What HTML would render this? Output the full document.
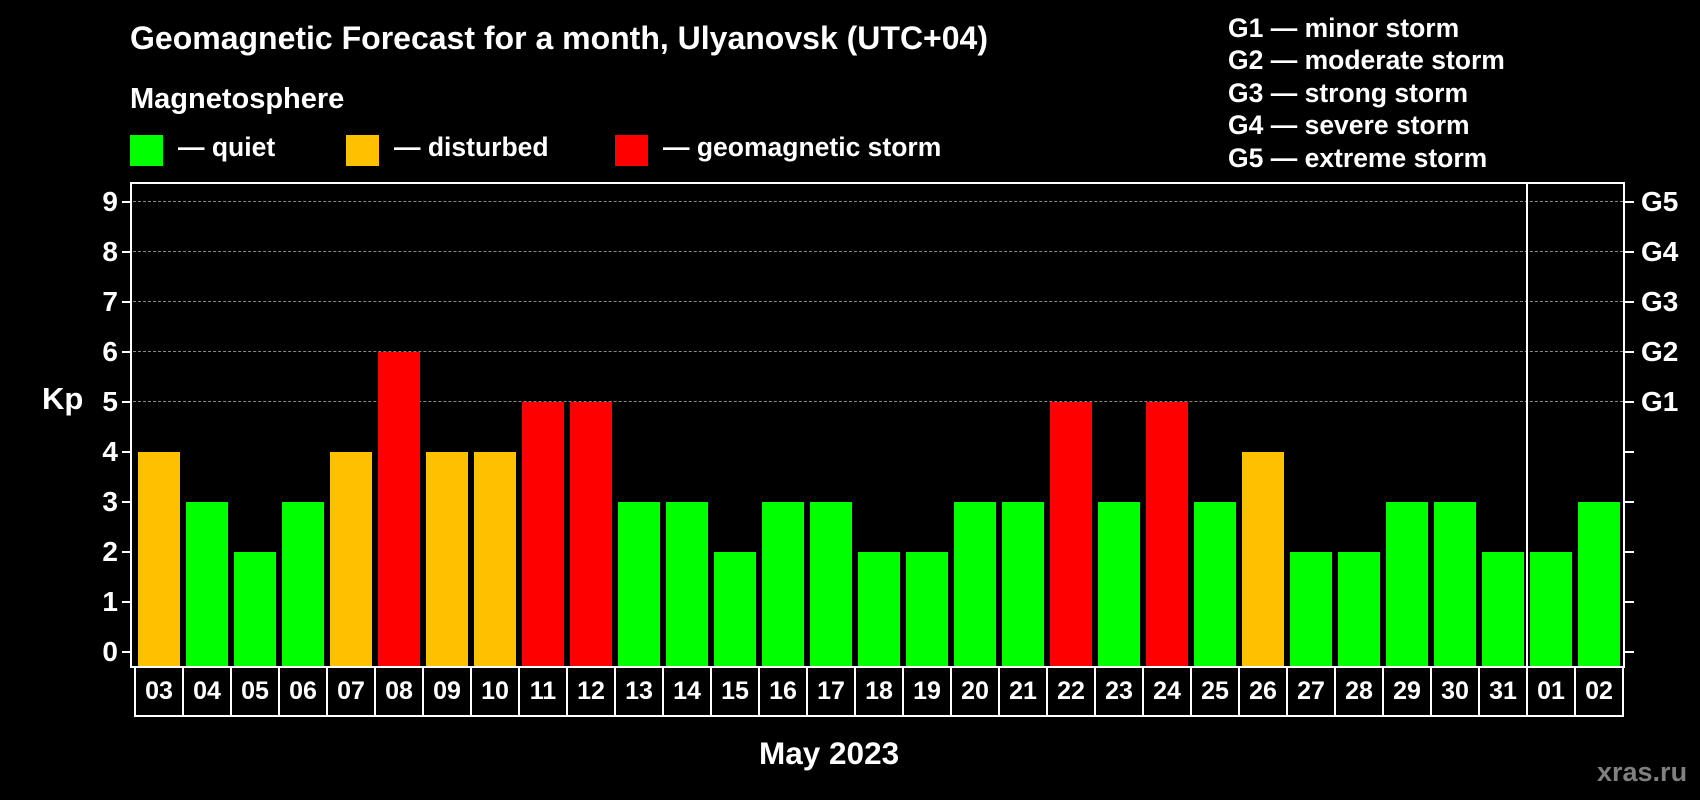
<!DOCTYPE html>
<html><head><meta charset="utf-8"><style>
body{margin:0;width:1700px;height:800px;background:#000;position:relative;overflow:hidden;font-family:"Liberation Sans",Arial,sans-serif;font-weight:bold;color:#fff}
.a{position:absolute;white-space:nowrap;line-height:1}
.b{position:absolute;width:42px}
.g{background:#00ff00}.o{background:#ffc000}.r{background:#ff0000}
.grid{position:absolute;left:133px;width:1490px;height:0;border-top:1px dashed #888}
.tl{position:absolute;left:122px;width:9px;height:2px;background:#fff}
.tr{position:absolute;left:1624px;width:10px;height:2px;background:#fff}
.yl{position:absolute;left:80px;width:38px;text-align:right;font-size:28px;line-height:30px}
.gl{position:absolute;left:1641px;font-size:28px;line-height:30px}
.c{position:absolute;top:668px;width:46px;height:47px;border:2px solid #fff;border-top:none;border-left:none;font-size:25px;line-height:46px;text-align:center}
</style></head><body>
<div class="a" style="left:130px;top:22px;font-size:32px">Geomagnetic Forecast for a month, Ulyanovsk (UTC+04)</div>
<div class="a" style="left:130px;top:85px;font-size:29px">Magnetosphere</div>
<div class="a g" style="left:130px;top:135px;width:33px;height:31px"></div>
<div class="a" style="left:178px;top:134px;font-size:26.5px">— quiet</div>
<div class="a o" style="left:346px;top:135px;width:33px;height:31px"></div>
<div class="a" style="left:394px;top:134px;font-size:26.5px">— disturbed</div>
<div class="a r" style="left:615px;top:135px;width:33px;height:31px"></div>
<div class="a" style="left:663px;top:134px;font-size:26.5px">— geomagnetic storm</div>
<div class="a" style="left:1228px;top:12px;font-size:26.5px;line-height:32.4px">G1 — minor storm<br>G2 — moderate storm<br>G3 — strong storm<br>G4 — severe storm<br>G5 — extreme storm</div>

<div class="grid" style="top:201px"></div><div class="grid" style="top:251px"></div><div class="grid" style="top:301px"></div><div class="grid" style="top:351px"></div><div class="grid" style="top:401px"></div>

<div class="a" style="left:130px;top:182px;width:1495px;height:486px;border:2px solid #fff;border-bottom:none;box-sizing:border-box"></div>
<div class="a" style="left:1526px;top:183px;width:2px;height:485px;background:#fff"></div>

<div class="tl" style="top:201px"></div><div class="tl" style="top:251px"></div><div class="tl" style="top:301px"></div><div class="tl" style="top:351px"></div><div class="tl" style="top:401px"></div><div class="tl" style="top:451px"></div><div class="tl" style="top:501px"></div><div class="tl" style="top:551px"></div><div class="tl" style="top:601px"></div><div class="tl" style="top:651px"></div>
<div class="tr" style="top:201px"></div><div class="tr" style="top:251px"></div><div class="tr" style="top:301px"></div><div class="tr" style="top:351px"></div><div class="tr" style="top:401px"></div><div class="tr" style="top:451px"></div><div class="tr" style="top:501px"></div><div class="tr" style="top:551px"></div><div class="tr" style="top:601px"></div><div class="tr" style="top:651px"></div>

<div class="yl" style="top:187px">9</div><div class="yl" style="top:237px">8</div><div class="yl" style="top:287px">7</div><div class="yl" style="top:337px">6</div><div class="yl" style="top:387px">5</div><div class="yl" style="top:437px">4</div><div class="yl" style="top:487px">3</div><div class="yl" style="top:537px">2</div><div class="yl" style="top:587px">1</div><div class="yl" style="top:637px">0</div>
<div class="a" style="left:42px;top:383px;font-size:31px">Kp</div>
<div class="gl" style="top:187px">G5</div><div class="gl" style="top:237px">G4</div><div class="gl" style="top:287px">G3</div><div class="gl" style="top:337px">G2</div><div class="gl" style="top:387px">G1</div>

<div class="b o" style="left:138px;top:452px;height:216px"></div>
<div class="b g" style="left:186px;top:502px;height:166px"></div>
<div class="b g" style="left:234px;top:552px;height:116px"></div>
<div class="b g" style="left:282px;top:502px;height:166px"></div>
<div class="b o" style="left:330px;top:452px;height:216px"></div>
<div class="b r" style="left:378px;top:352px;height:316px"></div>
<div class="b o" style="left:426px;top:452px;height:216px"></div>
<div class="b o" style="left:474px;top:452px;height:216px"></div>
<div class="b r" style="left:522px;top:402px;height:266px"></div>
<div class="b r" style="left:570px;top:402px;height:266px"></div>
<div class="b g" style="left:618px;top:502px;height:166px"></div>
<div class="b g" style="left:666px;top:502px;height:166px"></div>
<div class="b g" style="left:714px;top:552px;height:116px"></div>
<div class="b g" style="left:762px;top:502px;height:166px"></div>
<div class="b g" style="left:810px;top:502px;height:166px"></div>
<div class="b g" style="left:858px;top:552px;height:116px"></div>
<div class="b g" style="left:906px;top:552px;height:116px"></div>
<div class="b g" style="left:954px;top:502px;height:166px"></div>
<div class="b g" style="left:1002px;top:502px;height:166px"></div>
<div class="b r" style="left:1050px;top:402px;height:266px"></div>
<div class="b g" style="left:1098px;top:502px;height:166px"></div>
<div class="b r" style="left:1146px;top:402px;height:266px"></div>
<div class="b g" style="left:1194px;top:502px;height:166px"></div>
<div class="b o" style="left:1242px;top:452px;height:216px"></div>
<div class="b g" style="left:1290px;top:552px;height:116px"></div>
<div class="b g" style="left:1338px;top:552px;height:116px"></div>
<div class="b g" style="left:1386px;top:502px;height:166px"></div>
<div class="b g" style="left:1434px;top:502px;height:166px"></div>
<div class="b g" style="left:1482px;top:552px;height:116px"></div>
<div class="b g" style="left:1530px;top:552px;height:116px"></div>
<div class="b g" style="left:1578px;top:502px;height:166px"></div>

<div class="a" style="left:130px;top:666px;width:1495px;height:2px;background:#fff"></div>
<div class="a" style="left:134px;top:668px;width:2px;height:49px;background:#fff"></div>
<div class="c" style="left:136px">03</div><div class="c" style="left:184px">04</div><div class="c" style="left:232px">05</div><div class="c" style="left:280px">06</div><div class="c" style="left:328px">07</div><div class="c" style="left:376px">08</div><div class="c" style="left:424px">09</div><div class="c" style="left:472px">10</div><div class="c" style="left:520px">11</div><div class="c" style="left:568px">12</div><div class="c" style="left:616px">13</div><div class="c" style="left:664px">14</div><div class="c" style="left:712px">15</div><div class="c" style="left:760px">16</div><div class="c" style="left:808px">17</div><div class="c" style="left:856px">18</div><div class="c" style="left:904px">19</div><div class="c" style="left:952px">20</div><div class="c" style="left:1000px">21</div><div class="c" style="left:1048px">22</div><div class="c" style="left:1096px">23</div><div class="c" style="left:1144px">24</div><div class="c" style="left:1192px">25</div><div class="c" style="left:1240px">26</div><div class="c" style="left:1288px">27</div><div class="c" style="left:1336px">28</div><div class="c" style="left:1384px">29</div><div class="c" style="left:1432px">30</div><div class="c" style="left:1480px">31</div><div class="c" style="left:1528px">01</div><div class="c" style="left:1576px">02</div>

<div class="a" style="left:759px;top:738px;font-size:31.5px">May 2023</div>
<div class="a" style="left:1597px;top:759px;font-size:27px;color:#808080">xras.ru</div>
</body></html>
